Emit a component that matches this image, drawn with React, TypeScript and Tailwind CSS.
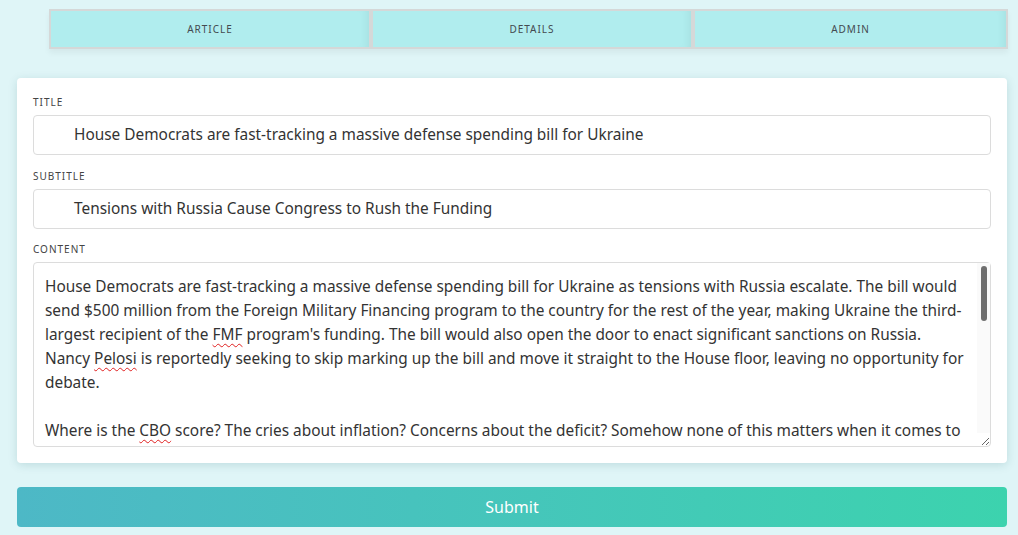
import React from "react";

const font = { fontFamily: '"Noto Sans", "Open Sans", sans-serif' };

function Bad({ children }: { children: React.ReactNode }) {
  return (
    <span className="underline decoration-wavy decoration-[#e02020] decoration-1 underline-offset-[3px]">
      {children}
    </span>
  );
}

export default function App() {
  return (
    <div className="w-[1018px] h-[535px] bg-[#dff5f7] overflow-hidden" style={font}>
      <div className="pt-[9px] pl-[49px] pr-[10px]">
        <div className="flex h-[40px] shadow-[0_4px_6px_rgba(0,0,0,0.05)]">
          {["ARTICLE", "DETAILS", "ADMIN"].map((t, i) => (
            <div
              key={t}
              className={`flex items-center justify-center bg-[#b0edee] border-2 border-[#d5d8d8] text-[10px] tracking-[0.1em] text-[#444a50] shadow-[inset_-8px_0_8px_-6px_rgba(0,0,0,0.06)] ${
                i === 0 ? "w-[322px]" : i === 1 ? "w-[322px]" : "flex-1"
              }`}
            >
              {t}
            </div>
          ))}
        </div>
      </div>

      <div className="mx-[17px] mt-[29px] w-[990px] h-[385px] bg-white rounded-[4px] shadow-[0_2px_10px_rgba(0,80,90,0.15)] px-[16px] pt-[17px]">
        <div className="text-[10px] tracking-[0.1em] text-[#444] leading-[14px]">TITLE</div>
        <div className="mt-[6px] h-[40px] border border-[#dcdcdc] rounded-[4px] flex items-center pl-[40px] text-[15.4px] text-[#333]">
          House Democrats are fast-tracking a massive defense spending bill for Ukraine
        </div>
        <div className="mt-[14px] text-[10px] tracking-[0.1em] text-[#444] leading-[14px]">SUBTITLE</div>
        <div className="mt-[6px] h-[40px] border border-[#dcdcdc] rounded-[4px] flex items-center pl-[40px] text-[15.4px] text-[#333]">
          Tensions with Russia Cause Congress to Rush the Funding
        </div>
        <div className="mt-[13px] text-[10px] tracking-[0.1em] text-[#444] leading-[14px]">CONTENT</div>
        <div className="relative mt-[6px] h-[185px]">
          <div className="h-full border border-[#dcdcdc] rounded-[4px] overflow-hidden resize-y pl-[11px] pr-[20px] pt-[12px] text-[15.4px] leading-[24px] text-[#333] whitespace-nowrap">
            <div>House Democrats are fast-tracking a massive defense spending bill for Ukraine as tensions with Russia escalate. The bill would</div>
            <div>send $500 million from the Foreign Military Financing program to the country for the rest of the year, making Ukraine the third-</div>
            <div>
              largest recipient of the <Bad>FMF</Bad> program's funding. The bill would also open the door to enact significant sanctions on Russia.
            </div>
            <div>
              Nancy <Bad>Pelosi</Bad> is reportedly seeking to skip marking up the bill and move it straight to the House floor, leaving no opportunity for
            </div>
            <div>debate.</div>
            <div>&nbsp;</div>
            <div>
              Where is the <Bad>CBO</Bad> score? The cries about inflation? Concerns about the deficit? Somehow none of this matters when it comes to
            </div>
          </div>
          <div className="absolute right-[1px] top-[1px] bottom-[14px] w-[13px] bg-[#fafafa]">
            <div className="mx-auto mt-[3px] w-[6px] h-[55px] rounded-full bg-[#6e6e6e]" />
          </div>
        </div>
      </div>

      <div className="mx-[17px] mt-[24px] w-[990px] h-[40px] rounded-[4px] bg-gradient-to-r from-[#4db8c6] to-[#3cd3ae] flex items-center justify-center text-white text-[16px]">
        Submit
      </div>
    </div>
  );
}
